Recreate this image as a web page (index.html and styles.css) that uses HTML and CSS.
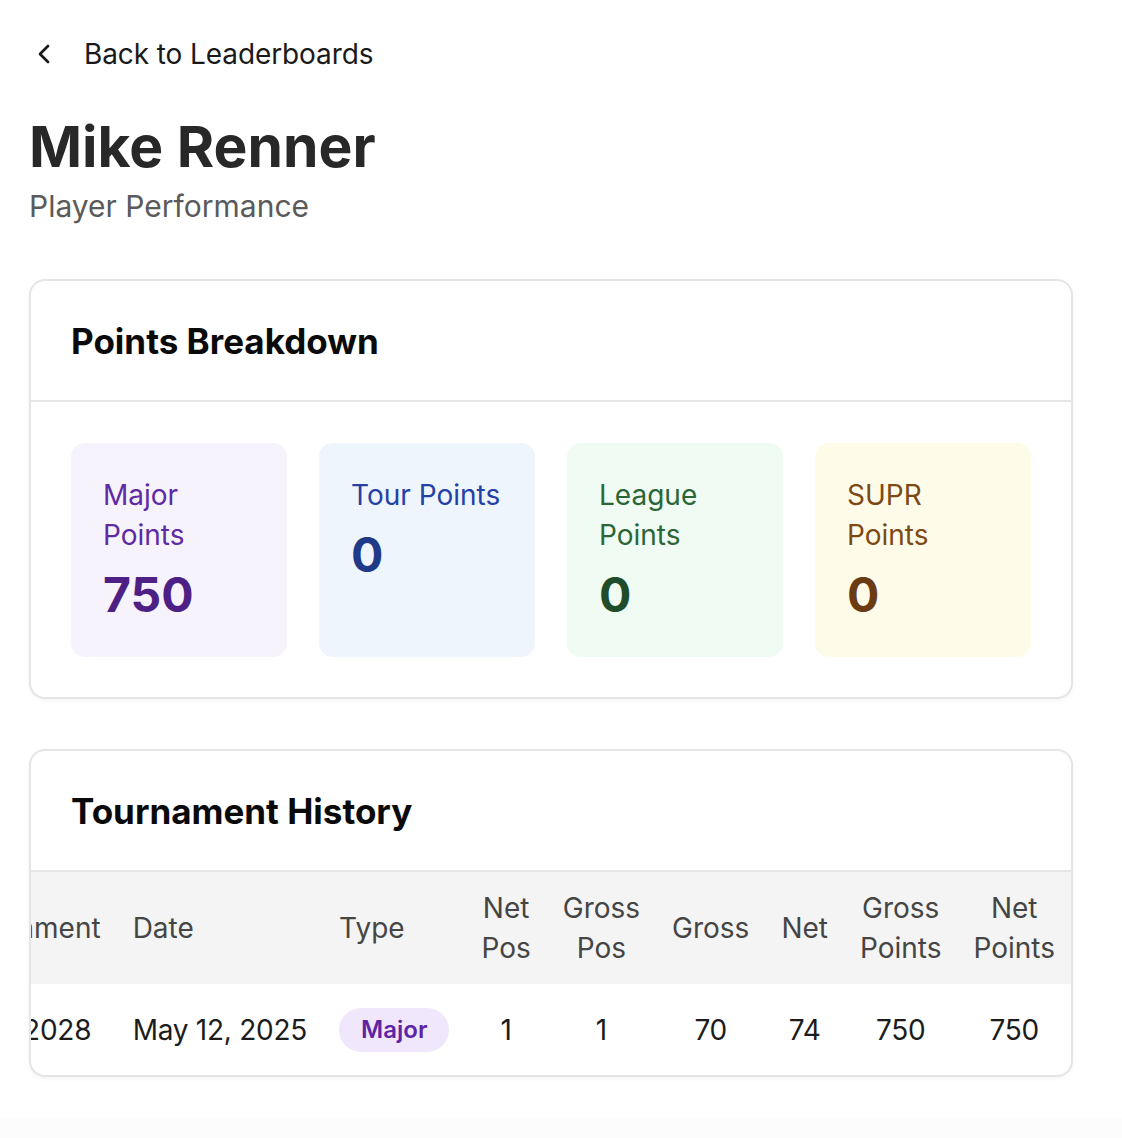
FILE: index.html
```html
<!DOCTYPE html>
<html lang="en">
<head>
<meta charset="utf-8">
<title>Mike Renner - Player Performance</title>
<link rel="stylesheet" href="styles.css">
</head>
<body>
<div class="page">
  <a class="back" href="#">
    <svg class="back-icon" viewBox="0 0 24 24" aria-hidden="true"><path d="m15 18-6-6 6-6"/></svg>
    <span>Back to Leaderboards</span>
  </a>
  <h1 class="title">Mike Renner</h1>
  <p class="subtitle">Player Performance</p>

  <section class="card">
    <div class="card-header"><h2 class="card-title">Points Breakdown</h2></div>
    <div class="card-body">
      <div class="tiles">
        <div class="tile tile-major">
          <div class="tile-label">Major Points</div>
          <div class="tile-value">750</div>
        </div>
        <div class="tile tile-tour">
          <div class="tile-label">Tour Points</div>
          <div class="tile-value">0</div>
        </div>
        <div class="tile tile-league">
          <div class="tile-label">League Points</div>
          <div class="tile-value">0</div>
        </div>
        <div class="tile tile-supr">
          <div class="tile-label">SUPR Points</div>
          <div class="tile-value">0</div>
        </div>
      </div>
    </div>
  </section>

  <section class="card card-history">
    <div class="card-header"><h2 class="card-title">Tournament History</h2></div>
    <div class="table-wrap">
      <table class="history">
        <thead>
          <tr>
            <th class="left">Tournament</th>
            <th class="left">Date</th>
            <th class="left">Type</th>
            <th>Net Pos</th>
            <th>Gross Pos</th>
            <th>Gross</th>
            <th>Net</th>
            <th>Gross Points</th>
            <th>Net Points</th>
          </tr>
        </thead>
        <tbody>
          <tr>
            <td class="left">Major 2028</td>
            <td class="left">May 12, 2025</td>
            <td class="left type"><span class="badge">Major</span></td>
            <td>1</td>
            <td>1</td>
            <td>70</td>
            <td>74</td>
            <td>750</td>
            <td>750</td>
          </tr>
        </tbody>
      </table>
    </div>
  </section>
</div>
<div class="page-end"></div>
</body>
</html>
```

FILE: styles.css
```css
html, body {
  margin: 0;
  background: #ffffff;
}

body {
  font-family: Inter, "Noto Sans", "Liberation Sans", sans-serif;
  color: #1c1c1c;
}

.page {
  padding: 34px 49px 0 29px;
}

.back {
  display: flex;
  align-items: center;
  height: 40px;
  font-size: 28px;
  line-height: 40px;
  color: #1a1a1a;
  text-decoration: none;
}

.back-icon {
  width: 32px;
  height: 32px;
  margin-left: -1px;
  margin-right: 24px;
  fill: none;
  stroke: currentColor;
  stroke-width: 2;
  stroke-linecap: round;
  stroke-linejoin: round;
}

.back span {
  letter-spacing: -0.1px;
}

.title {
  margin: 41px 0 0;
  font-size: 57px;
  line-height: 64px;
  font-weight: 700;
  color: #282828;
}

.subtitle {
  margin: 7px 0 0;
  font-size: 30px;
  line-height: 40px;
  color: #5a5a5a;
}

.card {
  margin-top: 53px;
  border: 2px solid #e5e5e5;
  border-radius: 16px;
  background: #ffffff;
  box-shadow: 0 2px 4px rgba(0, 0, 0, 0.04);
  overflow: hidden;
}

.card-history {
  margin-top: 50px;
}

.card-header {
  padding: 40px 40px 39px;
  border-bottom: 2px solid #e5e5e5;
}

.card-title {
  margin: 0;
  font-size: 35px;
  line-height: 40px;
  font-weight: 700;
  color: #0a0a0a;
}

.card-body {
  padding: 41px 40px 40px;
}

.tiles {
  display: grid;
  grid-template-columns: repeat(4, 1fr);
  gap: 32px;
}

.tile {
  border-radius: 14px;
  padding: 32px 32px 30px;
}

.tile-label {
  font-size: 28px;
  line-height: 40px;
}

.tile-value {
  margin-top: 8px;
  font-size: 48px;
  line-height: 64px;
  font-weight: 700;
}

.tile-major { background: #f7f3fd; }
.tile-major .tile-label { color: #5f2aa3; }
.tile-major .tile-value { color: #4e1f84; }

.tile-tour { background: #eef5fd; }
.tile-tour .tile-label { color: #2541a6; }
.tile-tour .tile-value { color: #1f3a86; }

.tile-league { background: #f0fbf3; }
.tile-league .tile-label { color: #2b6638; }
.tile-league .tile-value { color: #1f4d2b; }

.tile-supr { background: #fefce9; }
.tile-supr .tile-label { color: #7d4a16; }
.tile-supr .tile-value { color: #6b3c13; }

.table-wrap {
  overflow: hidden;
  direction: rtl;
}

.history {
  direction: ltr;
  width: 100%;
  border-collapse: collapse;
}

.history th {
  background: #f4f4f4;
  padding: 16px;
  font-size: 28px;
  line-height: 40px;
  font-weight: 400;
  color: #454545;
  text-align: center;
  vertical-align: middle;
}

.history td {
  padding: 24px 16px 23px;
  font-size: 28px;
  line-height: 40px;
  letter-spacing: -0.25px;
  color: #1c1c1c;
  text-align: center;
  vertical-align: middle;
  white-space: nowrap;
}

.history .left {
  text-align: left;
}

.history td.type {
  line-height: 44px;
}

.badge {
  display: inline-block;
  vertical-align: top;
  padding: 6px 22px;
  border-radius: 22px;
  background: #f1e7fd;
  color: #5e24a6;
  font-size: 24px;
  line-height: 32px;
  font-weight: 600;
  letter-spacing: 0;
}

.page-end {
  margin-top: 41px;
  height: 20px;
  background: #fcfcfc;
}
```
